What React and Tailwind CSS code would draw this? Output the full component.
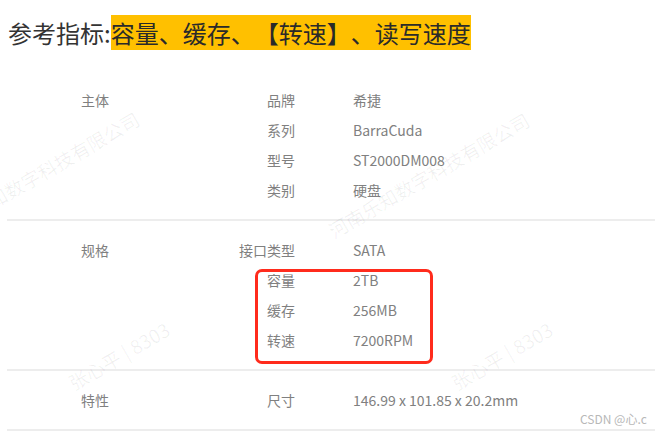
import React from "react";

const font = { fontFamily: '"Noto Sans CJK SC", "Noto Sans", sans-serif' };

function Section({ label, rows, children }) {
  return (
    <div className="relative flex border-b-2 border-[#ededed] pt-[14px] pb-[14px]">
      <div className="w-[160px] pl-[74px] h-[30px] leading-[30px] text-[14px] text-[#808080]">{label}</div>
      <div className="flex flex-col">
        {rows.map(([k, v]) => (
          <div key={k} className="flex h-[30px] leading-[30px] text-[14px] text-[#808080]">
            <div className="w-[128px] text-right">{k}</div>
            <div className="pl-[58px]">{v}</div>
          </div>
        ))}
      </div>
      {children}
    </div>
  );
}

function Watermark({ className, children }) {
  return (
    <span
      className={"pointer-events-none absolute whitespace-nowrap text-[19px] leading-[24px] text-black/[0.06] origin-left -rotate-[30deg] " + className}
    >
      {children}
    </span>
  );
}

export default function App() {
  return (
    <div className="relative w-[655px] h-[435px] overflow-hidden bg-white" style={font}>
      <div className="pt-[17px] pl-[8px] text-[24px] leading-[31px] text-[#333333] [text-spacing-trim:space-all]">
        参考指标:<span className="bg-[#FFC000] text-[#2a2a2a]">容量、缓存、【转速】、读写速度</span>
      </div>
      <div className="mt-[23px] ml-[7px]">
        <Section
          label="主体"
          rows={[
            ["品牌", "希捷"],
            ["系列", "BarraCuda"],
            ["型号", "ST2000DM008"],
            ["类别", "硬盘"],
          ]}
        />
        <Section
          label="规格"
          rows={[
            ["接口类型", "SATA"],
            ["容量", "2TB"],
            ["缓存", "256MB"],
            ["转速", "7200RPM"],
          ]}
        />
        <Section label="特性" rows={[["尺寸", "146.99 x 101.85 x 20.2mm"]]} />
      </div>

      <div className="absolute left-[255px] top-[269px] w-[178px] h-[95px] border-[3px] border-[#ff2b1c] rounded-[7px]" />

      <Watermark className="left-[-60px] top-[219px]">河南乐知数字科技有限公司</Watermark>
      <Watermark className="left-[330px] top-[220px]">河南乐知数字科技有限公司</Watermark>
      <Watermark className="left-[70px] top-[372px]">张心平 | 8303</Watermark>
      <Watermark className="left-[453px] top-[372px]">张心平 | 8303</Watermark>

      <div className="absolute left-[580px] top-[412px] text-[12px] leading-[14px] text-[#b8b8b8]">CSDN @心.c</div>
    </div>
  );
}
